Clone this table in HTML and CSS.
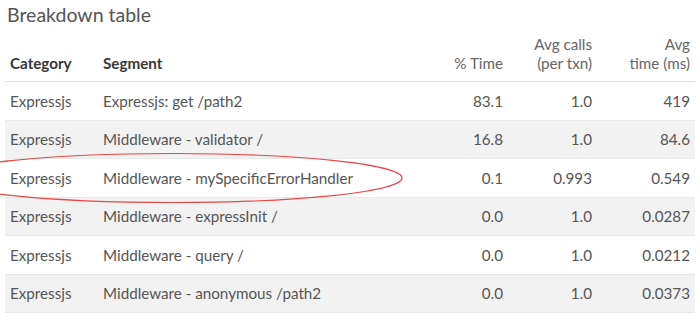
FILE: index.html
```html
<!DOCTYPE html>
<html>
<head>
<meta charset="utf-8">
<link rel="stylesheet" href="styles.css">
</head>
<body>
<div class="wrap">
  <h2 class="title">Breakdown table</h2>
  <table class="breakdown">
    <thead>
      <tr>
        <th class="cat">Category</th>
        <th class="seg">Segment</th>
        <th class="num light">% Time</th>
        <th class="num light">Avg calls<br>(per txn)</th>
        <th class="num light">Avg<br>time (ms)</th>
      </tr>
    </thead>
    <tbody>
      <tr><td>Expressjs</td><td>Expressjs: get /path2</td><td class="num">83.1</td><td class="num">1.0</td><td class="num">419</td></tr>
      <tr><td>Expressjs</td><td>Middleware - validator /</td><td class="num">16.8</td><td class="num">1.0</td><td class="num">84.6</td></tr>
      <tr><td>Expressjs</td><td>Middleware - mySpecificErrorHandler</td><td class="num">0.1</td><td class="num">0.993</td><td class="num">0.549</td></tr>
      <tr><td>Expressjs</td><td>Middleware - expressInit /</td><td class="num">0.0</td><td class="num">1.0</td><td class="num">0.0287</td></tr>
      <tr><td>Expressjs</td><td>Middleware - query /</td><td class="num">0.0</td><td class="num">1.0</td><td class="num">0.0212</td></tr>
      <tr><td>Expressjs</td><td>Middleware - anonymous /path2</td><td class="num">0.0</td><td class="num">1.0</td><td class="num">0.0373</td></tr>
    </tbody>
  </table>
  <svg class="circle" width="470" height="70" viewBox="0 0 470 70">
    <ellipse cx="233" cy="35" rx="229" ry="24.5" fill="none" stroke="#e8474a" stroke-width="1.2"/>
  </svg>
</div>
</body>
</html>
```
FILE: styles.css
```css
html, body {
  margin: 0;
  padding: 0;
  background: #fff;
}
body {
  font-family: Lato, "Noto Sans", sans-serif;
  color: #555;
}
.wrap {
  position: relative;
  padding: 0 5px;
}
.title {
  margin: 0;
  padding: 2px 0 0 2px;
  font-size: 19.5px;
  font-weight: 400;
  color: #555;
  line-height: 26px;
}
.breakdown {
  width: 690px;
  border-collapse: collapse;
  margin-top: 7px;
  font-size: 15.2px;
}
.breakdown th {
  text-align: left;
  vertical-align: bottom;
  font-weight: 700;
  color: #383838;
  line-height: 19px;
  padding: 0 5px 8px 5px;
  border-bottom: 1px solid #e4e4e4;
}
.breakdown th.light {
  font-weight: 400;
  color: #666;
}
.breakdown th.cat { width: 83px; }
.breakdown td {
  height: 37.5px;
  padding: 0 5px;
  vertical-align: middle;
  border-bottom: 1px solid #e8e8e8;
  white-space: nowrap;
}
.breakdown tbody tr:nth-child(even) td {
  background: #f2f2f2;
}
.breakdown .num {
  text-align: right;
}
.breakdown th.num:nth-child(3) { width: 90px; }
.breakdown th.num:nth-child(4) { width: 79px; }
.breakdown th.num:nth-child(5) { width: 88px; }
.circle {
  position: absolute;
  left: -60px;
  top: 143px;
  pointer-events: none;
}
```
